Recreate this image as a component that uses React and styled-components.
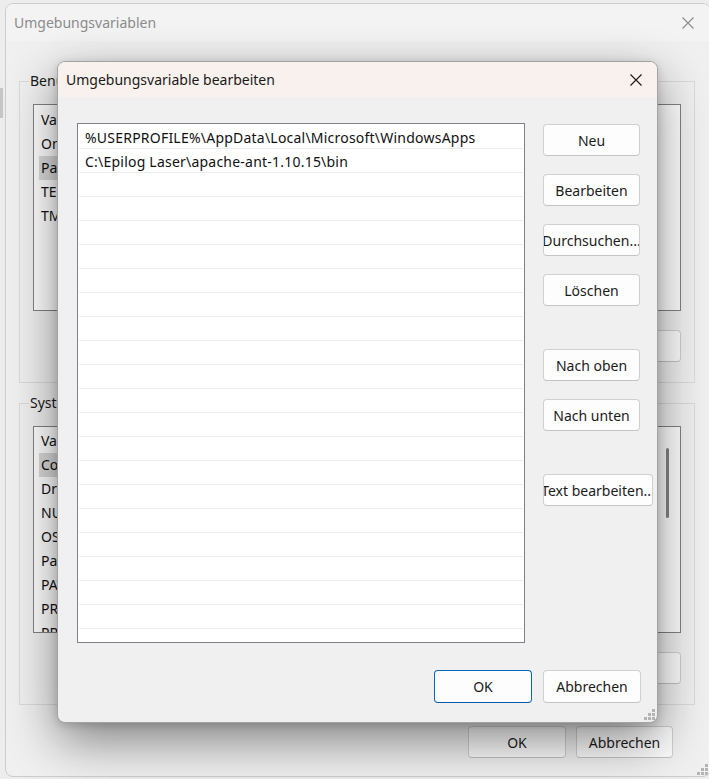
import React from 'react';
import styled, { createGlobalStyle } from 'styled-components';

const GlobalStyle = createGlobalStyle`
  * { box-sizing: border-box; }
  html, body { margin: 0; padding: 0; }
  body {
    background: #ededed;
    font-family: "Noto Sans", "Open Sans", sans-serif;
    font-size: 14px;
    color: #1a1a1a;
  }
`;

const Desktop = styled.div`
  position: relative;
  width: 709px;
  height: 779px;
  overflow: hidden;
  padding: 3px 0 0 5px;
`;

const SideThumb = styled.div`
  position: absolute;
  left: 0;
  top: 88px;
  width: 3px;
  height: 30px;
  background: #c6c6c6;
`;

// background window (inactive)

const Window = styled.div`
  position: relative;
  width: 706px;
  height: 774px;
  background: #f0f0f0;
  border: 1px solid #cdcdcd;
  border-radius: 8px;
  overflow: hidden;
  display: flex;
  flex-direction: column;
`;

const WindowTitle = styled.div`
  height: 37px;
  flex: none;
  display: flex;
  align-items: center;
  justify-content: space-between;
  padding: 0 16px 0 8px;
  background: #f3f3f3;
  color: #8b8b8b;
`;

const WindowBody = styled.div`
  display: flex;
  flex-direction: column;
  padding: 40px 0 0 13px;
`;

const GroupBox = styled.div`
  position: relative;
  width: 676px;
  height: 302px;
  margin-top: ${p => p.$offset || 0}px;
  border: 1px solid #dadada;
  padding: ${p => p.$pad}px 13px 0;
  display: flex;
  flex-direction: column;
`;

const GroupLabel = styled.span`
  position: absolute;
  top: -11px;
  left: 9px;
  padding: 0 1px;
  line-height: 20px;
  background: #f0f0f0;
`;

const ListView = styled.div`
  position: relative;
  height: 207px;
  flex: none;
  background: #fff;
  border: 1px solid #828282;
  overflow: hidden;
  padding-top: ${p => p.$pad}px;
`;

const ListItem = styled.div`
  width: ${p => (p.$selected ? '190px' : 'auto')};
  height: 24px;
  line-height: 24px;
  white-space: nowrap;
  padding-left: ${p => (p.$selected ? 2 : 7)}px;
  margin-left: ${p => (p.$selected ? 5 : 0)}px;
  background: ${p => (p.$selected ? '#dadada' : 'transparent')};
  color: #111;
`;

const ScrollThumb = styled.div`
  position: absolute;
  right: 11px;
  top: 21px;
  width: 3px;
  height: 70px;
  border-radius: 2px;
  background: #858585;
`;

const ButtonRow = styled.div`
  display: flex;
  justify-content: flex-end;
  gap: 10px;
  margin-top: 19px;
`;

const Footer = styled.div`
  display: flex;
  justify-content: flex-end;
  gap: 10px;
  padding: 21px 37px 0 0;
`;

const Button = styled.button`
  flex: none;
  width: ${p => p.$w || 97}px;
  height: ${p => p.$h || 32}px;
  margin-top: ${p => (p.$spaced ? 25 : 0)}px;
  display: flex;
  align-items: center;
  justify-content: center;
  overflow: hidden;
  white-space: nowrap;
  padding: 0;
  font-family: inherit;
  font-size: 14px;
  color: #1b1b1b;
  background: #fdfdfd;
  border: 1px solid ${p => (p.$primary ? '#0067c0' : '#d0d0d0')};
  border-bottom-color: ${p => (p.$primary ? '#0058a8' : '#c4c4c4')};
  border-radius: 4px;
`;

const Grip = styled.svg`
  position: absolute;
  right: ${p => p.$r}px;
  bottom: ${p => p.$b}px;
`;

// foreground dialog

const Dialog = styled.div`
  position: absolute;
  left: 57px;
  top: 61px;
  width: 601px;
  height: 662px;
  background: #f0f0f0;
  border: 1px solid #a3a3a3;
  border-radius: 8px;
  overflow: hidden;
  box-shadow: 0 18px 50px rgba(0, 0, 0, 0.46), 0 2px 10px rgba(0, 0, 0, 0.16);
  display: flex;
  flex-direction: column;
`;

const DialogTitle = styled.div`
  height: 35px;
  flex: none;
  display: flex;
  align-items: center;
  justify-content: space-between;
  padding: 0 15px 0 8px;
  background: #f8f1ed;
  color: #1a1a1a;
`;

const DialogBody = styled.div`
  display: grid;
  grid-template-columns: 448px 1fr;
  column-gap: 18px;
  padding: 26px 0 0 19px;
`;

const PathList = styled.div`
  height: 520px;
  background: #fff;
  border: 1px solid #7e8288;
  overflow: hidden;
  padding-top: 1px;
`;

const PathRow = styled.div`
  height: 24px;
  line-height: 25px;
  margin: 0 1px;
  padding-left: 6px;
  border-bottom: 1px solid #ededed;
  white-space: nowrap;
  letter-spacing: 0.22px;
  color: #111;
`;

const ButtonColumn = styled.div`
  display: flex;
  flex-direction: column;
  gap: 18px;
  padding-top: 1px;
`;

const DialogFooter = styled.div`
  display: flex;
  justify-content: flex-end;
  gap: 11px;
  padding: 27px 16px 0 0;
`;

const CloseIcon = ({ color }) => (
  <svg width="12" height="12" viewBox="0 0 12 12">
    <path d="M0.5 0.5L11.5 11.5M11.5 0.5L0.5 11.5" stroke={color} strokeWidth="1.1" fill="none" />
  </svg>
);

const GripIcon = ({ r, b }) => (
  <Grip $r={r} $b={b} width="12" height="12" viewBox="0 0 12 12">
    {[[8, 0], [4, 4], [8, 4], [0, 8], [4, 8], [8, 8]].map(([x, y]) => (
      <rect key={`${x}-${y}`} x={x} y={y} width="3" height="3" fill="#b4b4b4" />
    ))}
  </Grip>
);

const userVars = ['Variable', 'OneDrive', 'Path', 'TEMP', 'TMP'];
const systemVars = [
  'Variable', 'ComSpec', 'DriverData', 'NUMBER_OF_PROCESSORS', 'OS', 'Path',
  'PATHEXT', 'PROCESSOR_ARCHITECTURE', 'PROCESSOR_IDENTIFIER', 'PROCESSOR_LEVEL',
];

const paths = [
  '%USERPROFILE%\\AppData\\Local\\Microsoft\\WindowsApps',
  'C:\\Epilog Laser\\apache-ant-1.10.15\\bin',
];

const App = () => {
  const rows = Array.from({ length: 22 }, (_, i) => paths[i] || '');

  return (
    <Desktop>
      <GlobalStyle />
      <SideThumb />
      <Window>
        <WindowTitle>
          <span>Umgebungsvariablen</span>
          <CloseIcon color="#8a8a8a" />
        </WindowTitle>
        <WindowBody>
          <GroupBox $pad={22}>
            <GroupLabel>Benutzervariablen für Benutzer</GroupLabel>
            <ListView $pad={3}>
              {userVars.map(v => (
                <ListItem key={v} $selected={v === 'Path'}>{v}</ListItem>
              ))}
            </ListView>
            <ButtonRow>
              <Button>Neu...</Button>
              <Button>Bearbeiten...</Button>
              <Button $w={116}>Löschen</Button>
            </ButtonRow>
          </GroupBox>
          <GroupBox $pad={22} $offset={20}>
            <GroupLabel>Systemvariablen</GroupLabel>
            <ListView $pad={2}>
              {systemVars.map(v => (
                <ListItem key={v} $selected={v === 'ComSpec'}>{v}</ListItem>
              ))}
              <ScrollThumb />
            </ListView>
            <ButtonRow>
              <Button>Neu...</Button>
              <Button>Bearbeiten...</Button>
              <Button $w={116}>Löschen</Button>
            </ButtonRow>
          </GroupBox>
        </WindowBody>
        <Footer>
          <Button $w={98}>OK</Button>
          <Button>Abbrechen</Button>
        </Footer>
        <GripIcon r={1} b={0} />
      </Window>

      <Dialog>
        <DialogTitle>
          <span>Umgebungsvariable bearbeiten</span>
          <CloseIcon color="#1a1a1a" />
        </DialogTitle>
        <DialogBody>
          <PathList>
            {rows.map((p, i) => (
              <PathRow key={i}>{p}</PathRow>
            ))}
          </PathList>
          <ButtonColumn>
            <Button>Neu</Button>
            <Button>Bearbeiten</Button>
            <Button>Durchsuchen...</Button>
            <Button>Löschen</Button>
            <Button $spaced>Nach oben</Button>
            <Button>Nach unten</Button>
            <Button $spaced $w={110}>Text bearbeiten...</Button>
          </ButtonColumn>
        </DialogBody>
        <DialogFooter>
          <Button $primary $w={98} $h={33}>OK</Button>
          <Button $w={98} $h={33}>Abbrechen</Button>
        </DialogFooter>
        <GripIcon r={1} b={1} />
      </Dialog>
    </Desktop>
  );
};

export default App;
